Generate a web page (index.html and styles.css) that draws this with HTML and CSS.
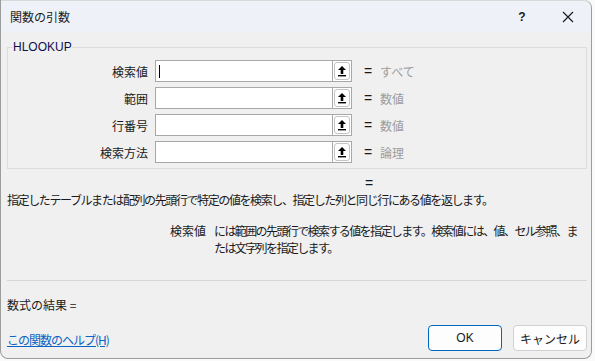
FILE: index.html
```html
<!DOCTYPE html>
<html lang="ja">
<head>
    <meta charset="UTF-8">
    <meta name="viewport" content="width=device-width, initial-scale=1.0">
    <title>関数の引数</title>
    <link rel="stylesheet" href="styles.css">
</head>
<body>
    <div class="dialog">
        <div class="titlebar">
            <span class="title">関数の引数</span>
            <span class="help-btn">?</span>
            <span class="close-btn">
                <svg width="12" height="12" viewBox="0 0 12 12"><path d="M1 1 L11 11 M11 1 L1 11" stroke="#1a1a1a" stroke-width="1.2"/></svg>
            </span>
        </div>
        <div class="content">
            <fieldset class="group">
                <legend>HLOOKUP</legend>
                <div class="row">
                    <label>検索値</label>
                    <div class="field"><span class="caret"></span></div>
                    <span class="ref-btn"><svg width="10" height="12" viewBox="0 0 10 12"><path d="M5 1 L9 5 H6.3 V9 H3.7 V5 H1 Z" fill="#000"/><rect x="1" y="10" width="8" height="1.4" fill="#000"/></svg></span>
                    <span class="eq">=</span>
                    <span class="hint">すべて</span>
                </div>
                <div class="row">
                    <label>範囲</label>
                    <div class="field"></div>
                    <span class="ref-btn"><svg width="10" height="12" viewBox="0 0 10 12"><path d="M5 1 L9 5 H6.3 V9 H3.7 V5 H1 Z" fill="#000"/><rect x="1" y="10" width="8" height="1.4" fill="#000"/></svg></span>
                    <span class="eq">=</span>
                    <span class="hint">数値</span>
                </div>
                <div class="row">
                    <label>行番号</label>
                    <div class="field"></div>
                    <span class="ref-btn"><svg width="10" height="12" viewBox="0 0 10 12"><path d="M5 1 L9 5 H6.3 V9 H3.7 V5 H1 Z" fill="#000"/><rect x="1" y="10" width="8" height="1.4" fill="#000"/></svg></span>
                    <span class="eq">=</span>
                    <span class="hint">数値</span>
                </div>
                <div class="row">
                    <label>検索方法</label>
                    <div class="field"></div>
                    <span class="ref-btn"><svg width="10" height="12" viewBox="0 0 10 12"><path d="M5 1 L9 5 H6.3 V9 H3.7 V5 H1 Z" fill="#000"/><rect x="1" y="10" width="8" height="1.4" fill="#000"/></svg></span>
                    <span class="eq">=</span>
                    <span class="hint">論理</span>
                </div>
            </fieldset>
            <div class="result-eq">=</div>
            <p class="desc">指定したテーブルまたは配列の先頭行で特定の値を検索し、指定した列と同じ行にある値を返します。</p>
            <div class="arg-desc">
                <span class="arg-name">検索値</span>
                <span class="arg-text">には範囲の先頭行で検索する値を指定します。検索値には、値、セル参照、または文字列を指定します。</span>
            </div>
            <div class="separator"></div>
            <div class="formula">数式の結果 =</div>
            <div class="footer">
                <a href="#" class="help-link">この関数のヘルプ(H)</a>
                <div class="buttons">
                    <button class="btn primary">OK</button>
                    <button class="btn">キャンセル</button>
                </div>
            </div>
        </div>
    </div>
</body>
</html>
```

FILE: styles.css
```css
/* reset */
html, body {
    margin: 0;
    padding: 0;
}
body {
    width: 595px;
    height: 361px;
    background: #fafafa;
    font-family: "Noto Sans CJK JP", "Noto Sans", sans-serif;
    font-size: 12px;
    color: #1a1a1a;
    overflow: hidden;
}

/* window */
.dialog {
    width: 592px;
    height: 359px;
    box-sizing: border-box;
    border: 1px solid #9c9c9c;
    border-top: none;
    border-radius: 0 8px 8px 8px;
    background: #f0f0f0;
    overflow: hidden;
    display: flex;
    flex-direction: column;
}
.titlebar {
    height: 31px;
    background: #eef2f8;
    display: flex;
    align-items: center;
    padding-left: 9px;
    border-top-right-radius: 8px;
    border-top: 1px solid #d8d8d8;
}
.title {
    flex: 1;
    font-size: 12px;
}
.help-btn {
    width: 46px;
    text-align: center;
    font-family: "Liberation Sans", sans-serif;
    font-weight: bold;
    font-size: 12px;
}
.close-btn {
    width: 46px;
    display: flex;
    justify-content: center;
    align-items: center;
}

.content {
    padding: 0 4px 0 6px;
    display: flex;
    flex-direction: column;
    flex: 1;
}

/* argument box */
.group {
    margin: 8px 0 0 0;
    padding: 6px 0 5px 0;
    border: 1px solid #dcdcdc;
    border-radius: 0;
}
.group legend {
    font-family: "Liberation Sans", sans-serif;
    font-size: 12px;
    color: #0f0f50;
    padding: 0;
    margin-left: 5px;
}
.row {
    display: flex;
    align-items: center;
    height: 22px;
    margin-bottom: 5px;
}
.row:last-child {
    margin-bottom: 0;
}
.row label {
    width: 140px;
    text-align: right;
    padding-right: 7px;
}
.field {
    width: 177px;
    height: 22px;
    box-sizing: border-box;
    background: #fff;
    border: 1px solid #a8a8a8;
    border-right: none;
    display: flex;
    align-items: center;
    padding-left: 3px;
}
.caret {
    width: 1px;
    height: 13px;
    background: #000;
}
.ref-btn {
    width: 20px;
    height: 22px;
    box-sizing: border-box;
    background: #fff;
    border: 1px solid #a8a8a8;
    display: flex;
    align-items: center;
    justify-content: center;
    position: relative;
}
.ref-btn::before {
    content: "";
    position: absolute;
    left: 1px;
    top: 1px;
    right: 1px;
    bottom: 1px;
    border: 1px solid #c4c4c4;
    border-radius: 3px;
}
.eq {
    margin-left: 12px;
    width: 16px;
    font-family: "Liberation Sans", sans-serif;
    font-size: 14px;
}
.hint {
    color: #9c9c9c;
}

.result-eq {
    margin: 6px 0 0 358px;
    height: 16px;
    font-family: "Liberation Sans", sans-serif;
    font-size: 14px;
    line-height: 16px;
}
.desc {
    margin: 0;
    line-height: 18px;
    letter-spacing: -1.4px;
}
.arg-desc {
    display: flex;
    margin: 13px 0 0 163px;
    line-height: 17px;
}
.arg-name {
    width: 44px;
    flex: none;
}
.arg-text {
    width: 372px;
    letter-spacing: -1.6px;
}

.separator {
    height: 1px;
    background: #d6d6d6;
    margin-top: 24px;
}
.formula {
    margin-top: 15px;
    height: 17px;
}
.footer {
    display: flex;
    align-items: center;
    justify-content: space-between;
    margin-top: 12px;
}
.help-link {
    color: #0a62c4;
    text-decoration: underline;
    margin-top: 3px;
    letter-spacing: -1px;
}
.buttons {
    display: flex;
    gap: 11px;
}
.btn {
    width: 74px;
    height: 26px;
    background: #fdfdfd;
    border: 1px solid #d0d0d0;
    border-radius: 4px;
    font-family: "Noto Sans CJK JP", sans-serif;
    font-size: 12px;
    color: #1a1a1a;
    padding: 0;
}
.btn.primary {
    border: 1px solid #0067c0;
    font-family: "Liberation Sans", sans-serif;
}
```
